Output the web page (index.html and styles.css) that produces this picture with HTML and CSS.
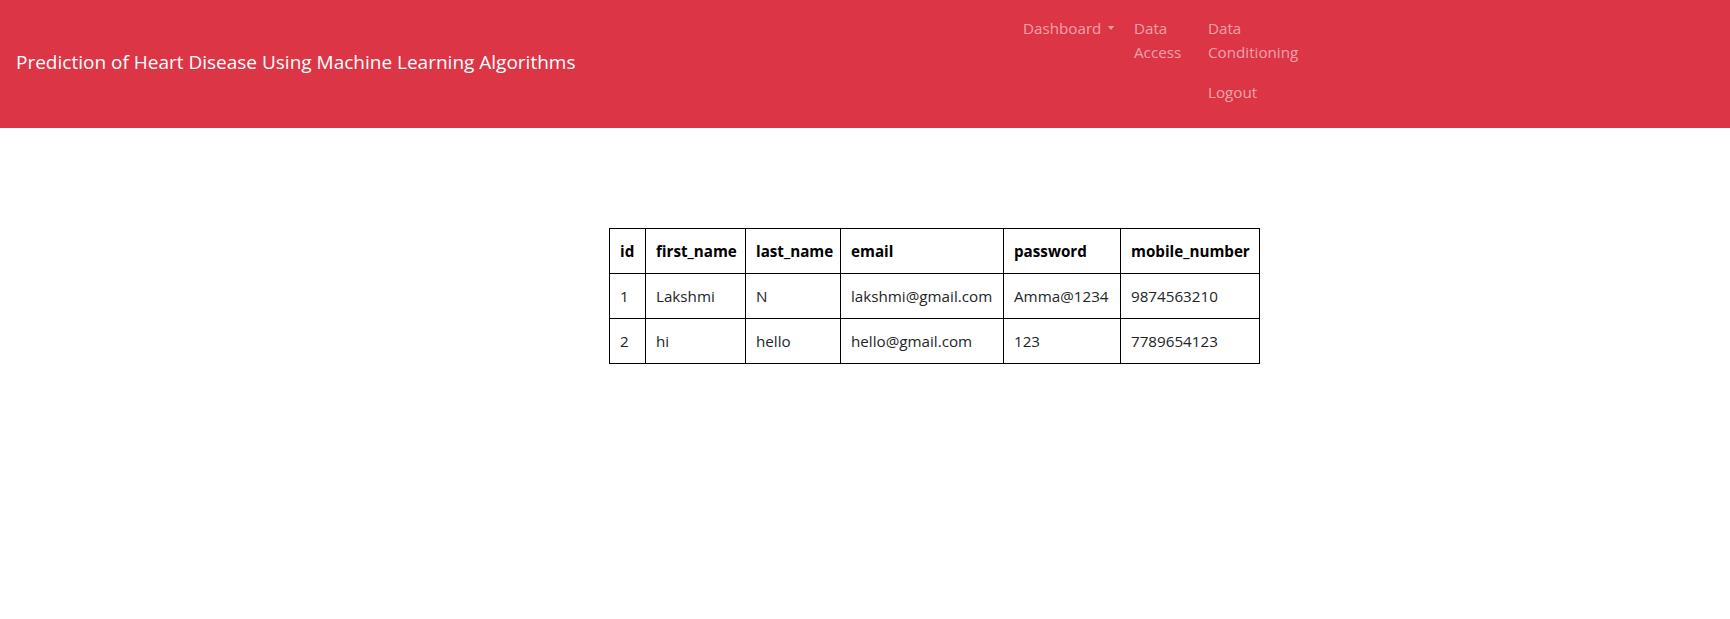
FILE: index.html
```html
<!DOCTYPE html>
<html lang="en">
<head>
<meta charset="utf-8">
<title>Prediction of Heart Disease</title>
<link rel="stylesheet" href="styles.css">
</head>
<body>
<header class="navbar">
  <div class="brand-wrap">
    <a class="brand" href="#">Prediction of Heart Disease Using Machine Learning Algorithms</a>
  </div>
  <nav class="nav">
    <a class="nav-link nav-dash" href="#">Dashboard<span class="caret"></span></a>
    <a class="nav-link nav-access" href="#"><span class="wrap">Data Access</span></a>
    <div class="nav-col">
      <a class="nav-link" href="#"><span class="wrap">Data Conditioning</span></a>
      <a class="nav-link nav-logout" href="#">Logout</a>
    </div>
  </nav>
</header>
<main class="content">
  <table class="users">
    <colgroup>
      <col class="c-id"><col class="c-first"><col class="c-last"><col class="c-email"><col class="c-pass"><col class="c-mobile">
    </colgroup>
    <thead>
      <tr><th>id</th><th>first_name</th><th>last_name</th><th>email</th><th>password</th><th>mobile_number</th></tr>
    </thead>
    <tbody>
      <tr><td>1</td><td>Lakshmi</td><td>N</td><td>lakshmi@gmail.com</td><td>Amma@1234</td><td>9874563210</td></tr>
      <tr><td>2</td><td>hi</td><td>hello</td><td>hello@gmail.com</td><td>123</td><td>7789654123</td></tr>
    </tbody>
  </table>
</main>
</body>
</html>
```

FILE: styles.css
```css
* { box-sizing: border-box; }
html, body { margin: 0; padding: 0; }
body {
  font-family: "Segoe UI", "Open Sans", "Noto Sans", sans-serif;
  font-size: 15.2px;
  line-height: 24px;
  color: #212529;
  background: #fff;
}
a { text-decoration: none; }

.navbar {
  display: grid;
  grid-template-columns: 1015px auto;
  height: 128px;
  background: #dc3545;
  padding: 8px 0;
}
.brand-wrap {
  display: flex;
  align-items: center;
  padding-left: 16px;
  padding-bottom: 5px;
}
.brand {
  color: #fff;
  font-size: 19px;
  line-height: 30px;
  white-space: nowrap;
}
.nav {
  display: flex;
  align-items: flex-start;
}
.nav-link {
  display: block;
  padding: 8px;
  color: rgba(255,255,255,0.55);
}
.nav-dash { width: 111px; white-space: nowrap; }
.caret {
  display: inline-block;
  margin-left: 7px;
  vertical-align: 4px;
  border-top: 4px solid;
  border-right: 3.5px solid transparent;
  border-left: 3.5px solid transparent;
  width: 0;
  height: 0;
}
.nav-access { width: 74px; }
.wrap { display: block; width: min-content; }
.nav-col { display: flex; flex-direction: column; }

.content {
  padding: 100px 0 0 609px;
}
.users {
  border-collapse: collapse;
  table-layout: fixed;
  width: 650px;
}
.c-id { width: 36px; }
.c-first { width: 100px; }
.c-last { width: 95px; }
.c-email { width: 163px; }
.c-pass { width: 117px; }
.c-mobile { width: 139px; }
.users th, .users td {
  border: 1px solid #000;
  padding: 10px;
  text-align: left;
  white-space: nowrap;
  height: 45px;
}
.users th { font-weight: 700; color: #000; }
.users td { color: #212529; }
```
